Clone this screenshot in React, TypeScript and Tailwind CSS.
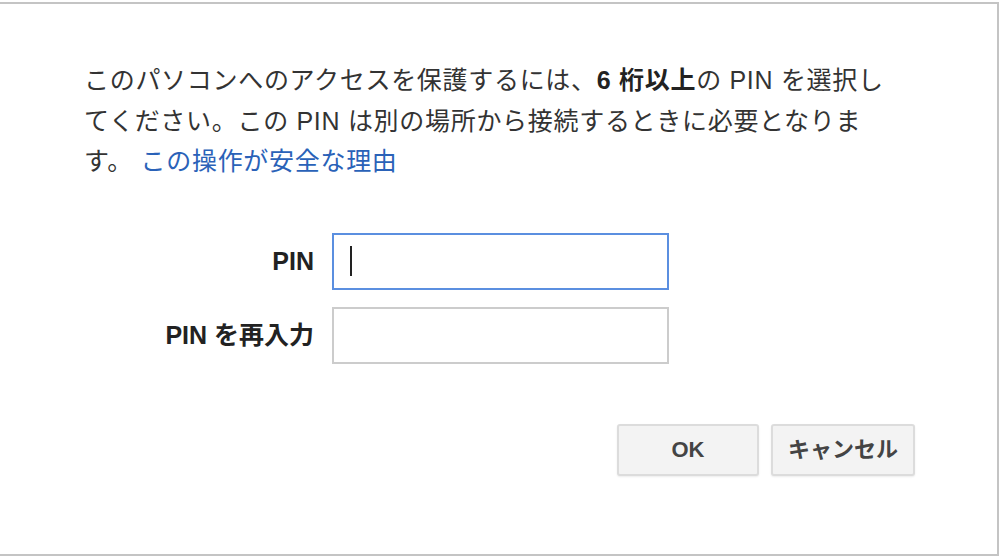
const font = { fontFamily: '"Liberation Sans", "Noto Sans CJK JP", sans-serif' }

function Field({ label, focused }: { label: string; focused?: boolean }) {
  return (
    <>
      <div className="text-right text-[25px] font-bold text-[#222] leading-none">{label}</div>
      <div
        className={
          focused
            ? 'h-[57px] w-[337px] border-2 border-[#5b8fe0] bg-white flex items-center pl-[16px]'
            : 'h-[57px] w-[337px] border-2 border-[#cccccc] bg-white flex items-center pl-[16px]'
        }
      >
        {focused && <div className="h-[30px] w-[2px] bg-[#222]" />}
      </div>
    </>
  )
}

export default function App() {
  return (
    <div className="w-[1001px] h-[557px] bg-white overflow-hidden" style={font}>
      <div className="mt-[2px] -ml-[2px] w-[1001px] h-[554px] border-t-2 border-r-2 border-b-2 border-[#c4c4c4] bg-white">
        <div className="pl-[86px] pt-[56px]">
          <p className="w-[800px] text-[25px] tracking-[0.7px] leading-[40.5px] text-[#333]">
            このパソコンへのアクセスを保護するには、<b className="text-[#222]">6 桁以上</b>の PIN を選択してください。この PIN は別の場所から接続するときに必要となります。{' '}
            <a className="text-[#2a62b8]">この操作が安全な理由</a>
          </p>

          <div className="mt-[51px] grid grid-cols-[230px_337px] gap-x-[18px] gap-y-[17px] items-center">
            <Field label="PIN" focused />
            <Field label="PIN を再入力" />
          </div>

          <div className="mt-[60px] flex justify-end gap-[12px] w-[831px]">
            <button className="w-[142px] h-[52px] rounded-[3px] border-2 border-[#dcdcdc] bg-[#f3f3f3] shadow-[0_1px_2px_rgba(0,0,0,0.08)] text-[22px] font-bold text-[#444]">
              OK
            </button>
            <button className="w-[144px] h-[52px] rounded-[3px] border-2 border-[#dcdcdc] bg-[#f3f3f3] shadow-[0_1px_2px_rgba(0,0,0,0.08)] text-[22px] font-bold text-[#444]">
              キャンセル
            </button>
          </div>
        </div>
      </div>
    </div>
  )
}
